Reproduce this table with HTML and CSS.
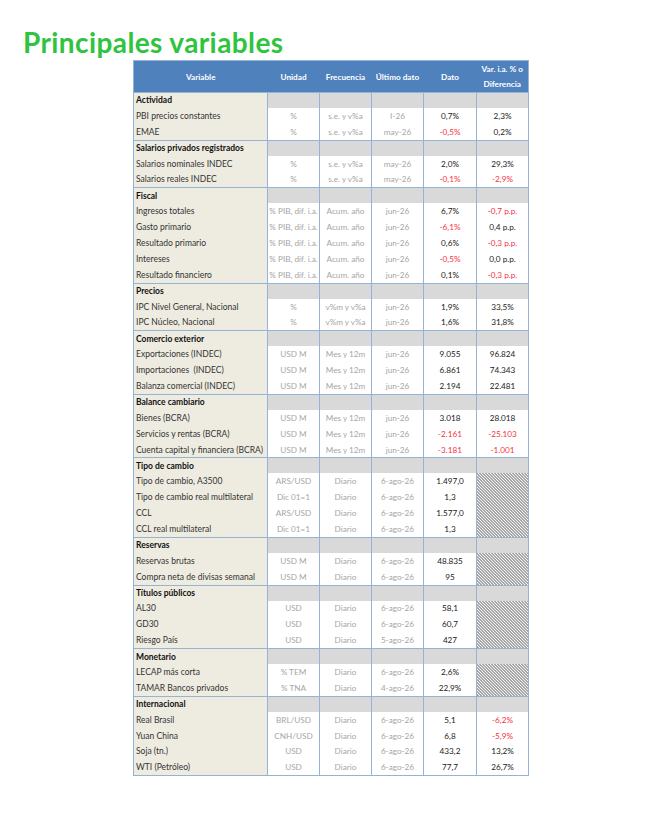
FILE: index.html
```html
<!DOCTYPE html>
<html lang="es">
<head>
<meta charset="utf-8">
<title>Principales variables</title>
<link rel="stylesheet" href="styles.css">
</head>
<body>
<h1 class="title">Principales variables</h1>
<table class="vars">
<colgroup>
<col class="c-var"><col class="c-uni"><col class="c-fre"><col class="c-ult"><col class="c-dat"><col class="c-dif">
</colgroup>
<thead>
<tr class="head"><th>Variable</th><th>Unidad</th><th>Frecuencia</th><th>Último dato</th><th>Dato</th><th class="two">Var. i.a. % o<br>Diferencia</th></tr>
</thead>
<tbody>
<tr class="sec"><td>Actividad</td><td></td><td></td><td></td><td></td><td></td></tr>
<tr><td>PBI precios constantes</td><td>%</td><td>s.e. y v%a</td><td>I-26</td><td>0,7%</td><td>2,3%</td></tr>
<tr><td>EMAE</td><td>%</td><td>s.e. y v%a</td><td>may-26</td><td class="neg">-0,5%</td><td>0,2%</td></tr>

<tr class="sec"><td>Salarios privados registrados</td><td></td><td></td><td></td><td></td><td></td></tr>
<tr><td>Salarios nominales INDEC</td><td>%</td><td>s.e. y v%a</td><td>may-26</td><td>2,0%</td><td>29,3%</td></tr>
<tr><td>Salarios reales INDEC</td><td>%</td><td>s.e. y v%a</td><td>may-26</td><td class="neg">-0,1%</td><td class="neg">-2,9%</td></tr>

<tr class="sec"><td>Fiscal</td><td></td><td></td><td></td><td></td><td></td></tr>
<tr><td>Ingresos totales</td><td>% PIB, dif. i.a.</td><td>Acum. año</td><td>jun-26</td><td>6,7%</td><td class="neg">-0,7 p.p.</td></tr>
<tr><td>Gasto primario</td><td>% PIB, dif. i.a.</td><td>Acum. año</td><td>jun-26</td><td class="neg">-6,1%</td><td>0,4 p.p.</td></tr>
<tr><td>Resultado primario</td><td>% PIB, dif. i.a.</td><td>Acum. año</td><td>jun-26</td><td>0,6%</td><td class="neg">-0,3 p.p.</td></tr>
<tr><td>Intereses</td><td>% PIB, dif. i.a.</td><td>Acum. año</td><td>jun-26</td><td class="neg">-0,5%</td><td>0,0 p.p.</td></tr>
<tr><td>Resultado financiero</td><td>% PIB, dif. i.a.</td><td>Acum. año</td><td>jun-26</td><td>0,1%</td><td class="neg">-0,3 p.p.</td></tr>

<tr class="sec"><td>Precios</td><td></td><td></td><td></td><td></td><td></td></tr>
<tr><td>IPC Nivel General, Nacional</td><td>%</td><td>v%m y v%a</td><td>jun-26</td><td>1,9%</td><td>33,5%</td></tr>
<tr><td>IPC Núcleo, Nacional</td><td>%</td><td>v%m y v%a</td><td>jun-26</td><td>1,6%</td><td>31,8%</td></tr>

<tr class="sec"><td>Comercio exterior</td><td></td><td></td><td></td><td></td><td></td></tr>
<tr><td>Exportaciones (INDEC)</td><td>USD M</td><td>Mes y 12m</td><td>jun-26</td><td>9.055</td><td>96.824</td></tr>
<tr><td>Importaciones&nbsp; (INDEC)</td><td>USD M</td><td>Mes y 12m</td><td>jun-26</td><td>6.861</td><td>74.343</td></tr>
<tr><td>Balanza comercial (INDEC)</td><td>USD M</td><td>Mes y 12m</td><td>jun-26</td><td>2.194</td><td>22.481</td></tr>

<tr class="sec"><td>Balance cambiario</td><td></td><td></td><td></td><td></td><td></td></tr>
<tr><td>Bienes (BCRA)</td><td>USD M</td><td>Mes y 12m</td><td>jun-26</td><td>3.018</td><td>28.018</td></tr>
<tr><td>Servicios y rentas (BCRA)</td><td>USD M</td><td>Mes y 12m</td><td>jun-26</td><td class="neg">-2.161</td><td class="neg">-25.103</td></tr>
<tr><td>Cuenta capital y financiera (BCRA)</td><td>USD M</td><td>Mes y 12m</td><td>jun-26</td><td class="neg">-3.181</td><td class="neg">-1.001</td></tr>

<tr class="sec"><td>Tipo de cambio</td><td></td><td></td><td></td><td></td><td></td></tr>
<tr><td>Tipo de cambio, A3500</td><td>ARS/USD</td><td>Diario</td><td>6-ago-26</td><td>1.497,0</td><td class="na" rowspan="4"></td></tr>
<tr><td>Tipo de cambio real multilateral</td><td>Dic 01=1</td><td>Diario</td><td>6-ago-26</td><td>1,3</td></tr>
<tr><td>CCL</td><td>ARS/USD</td><td>Diario</td><td>6-ago-26</td><td>1.577,0</td></tr>
<tr><td>CCL real multilateral</td><td>Dic 01=1</td><td>Diario</td><td>6-ago-26</td><td>1,3</td></tr>

<tr class="sec"><td>Reservas</td><td></td><td></td><td></td><td></td><td></td></tr>
<tr><td>Reservas brutas</td><td>USD M</td><td>Diario</td><td>6-ago-26</td><td>48.835</td><td class="na" rowspan="2"></td></tr>
<tr><td>Compra neta de divisas semanal</td><td>USD M</td><td>Diario</td><td>6-ago-26</td><td>95</td></tr>

<tr class="sec"><td>Títulos públicos</td><td></td><td></td><td></td><td></td><td></td></tr>
<tr><td>AL30</td><td>USD</td><td>Diario</td><td>6-ago-26</td><td>58,1</td><td class="na" rowspan="3"></td></tr>
<tr><td>GD30</td><td>USD</td><td>Diario</td><td>6-ago-26</td><td>60,7</td></tr>
<tr><td>Riesgo País</td><td>USD</td><td>Diario</td><td>5-ago-26</td><td>427</td></tr>

<tr class="sec"><td>Monetario</td><td></td><td></td><td></td><td></td><td></td></tr>
<tr><td>LECAP más corta</td><td>% TEM</td><td>Diario</td><td>6-ago-26</td><td>2,6%</td><td class="na" rowspan="2"></td></tr>
<tr><td>TAMAR Bancos privados</td><td>% TNA</td><td>Diario</td><td>4-ago-26</td><td>22,9%</td></tr>

<tr class="sec"><td>Internacional</td><td></td><td></td><td></td><td></td><td></td></tr>
<tr><td>Real Brasil</td><td>BRL/USD</td><td>Diario</td><td>6-ago-26</td><td>5,1</td><td class="neg">-6,2%</td></tr>
<tr><td>Yuan China</td><td>CNH/USD</td><td>Diario</td><td>6-ago-26</td><td>6,8</td><td class="neg">-5,9%</td></tr>
<tr><td>Soja (tn.)</td><td>USD</td><td>Diario</td><td>6-ago-26</td><td>433,2</td><td>13,2%</td></tr>
<tr><td>WTI (Petróleo)</td><td>USD</td><td>Diario</td><td>6-ago-26</td><td>77,7</td><td>26,7%</td></tr>
</tbody>
</table>
</body>
</html>
```
FILE: styles.css
```css
html, body {
  margin: 0;
  padding: 0;
  background: #ffffff;
}
body {
  padding-top: 27px;
  font-family: Lato, "Liberation Sans", sans-serif;
}
.title {
  margin: 0 0 3px 23px;
  height: 30px;
  line-height: 30px;
  font-size: 28px;
  font-weight: 700;
  color: #2fc440;
  letter-spacing: 0.4px;
}
.vars {
  margin-left: 133px;
  border-collapse: collapse;
  table-layout: fixed;
  width: 396px;
  font-size: 8.2px;
  border: 1px solid #95b3d7;
}
.c-var { width: 134px; }
.c-uni { width: 52px; }
.c-fre { width: 52px; }
.c-ult { width: 52px; }
.c-dat { width: 53px; }
.c-dif { width: 52px; }
.head th {
  background: #4f81bd;
  color: #ffffff;
  font-weight: 700;
  height: 31px;
  padding: 0;
  font-size: 8.2px;
  text-align: center;
  vertical-align: middle;
}
.head th.two {
  line-height: 15px;
}
.vars td {
  height: 15.9px;
  padding: 0;
  text-align: center;
  vertical-align: middle;
  color: #a6a6a6;
  background: #ffffff;
  border-left: 1px solid #95b3d7;
  white-space: nowrap;
  overflow: hidden;
}
.vars td:first-child {
  text-align: left;
  padding-left: 2px;
  font-size: 8.5px;
  color: #333333;
  background: #eeece1;
  border-left: none;
}
.vars td:nth-child(5),
.vars td:nth-child(6) {
  color: #1a1a1a;
}
.vars td.neg {
  color: #f5333f;
}
.vars tr.sec td {
  height: 14.9px;
  background: #d9d9d9;
  border-top: 1px solid #95b3d7;
}
.vars tr.sec td:first-child {
  background: #eeece1;
  font-weight: 700;
  color: #111111;
}
.vars td.na {
  background-color: #f2f2f2;
  background-image: linear-gradient(45deg, #f2f2f2 0 25%, #5e5e5e 25% 50%, #f2f2f2 50% 75%, #5e5e5e 75% 100%);
  background-size: 3px 3px;
}
```
